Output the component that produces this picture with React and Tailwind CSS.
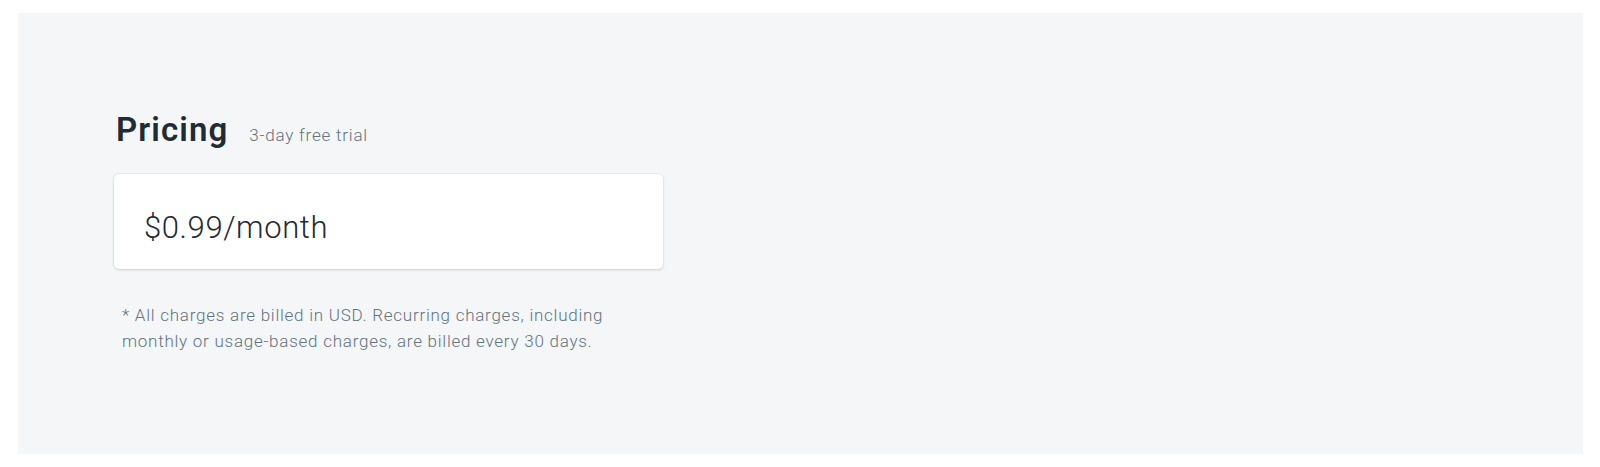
export default function App() {
  return (
    <div className="min-h-[467px] bg-white pt-[13px] pb-[13px] pl-[18px] pr-[17px] font-['Roboto','Liberation_Sans',sans-serif]">
      <div className="h-[441px] bg-[#f4f6f8] pl-[96px] pt-[97px]">
        <div className="flex items-baseline gap-[21px] pl-[2px]">
          <h2 className="text-[33px] leading-[40px] font-semibold text-[#212b36] tracking-[1.1px]">Pricing</h2>
          <span className="text-[17px] font-light text-[#637381] tracking-[0.8px]">3-day free trial</span>
        </div>
        <div className="mt-[24px] w-[549px] h-[95px] flex items-center pl-[30px] pt-[14px] bg-white rounded-[5px] shadow-[0_0_0_1px_rgba(63,63,68,0.05),0_1px_3px_0_rgba(63,63,68,0.15)]">
          <span className="text-[31px] font-light text-[#212b36] tracking-[0.6px]">$0.99/month</span>
        </div>
        <p className="mt-[33px] pl-[8px] w-[530px] text-[17px] leading-[26px] font-light text-[#637381] tracking-[0.75px]">
          * All charges are billed in USD. Recurring charges, including monthly or usage-based charges, are billed every 30 days.
        </p>
      </div>
    </div>
  );
}
